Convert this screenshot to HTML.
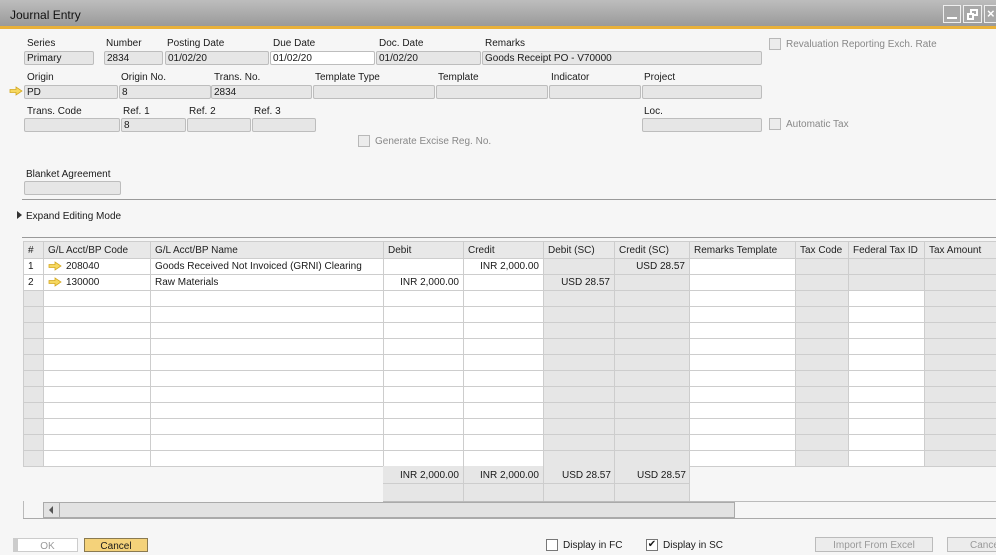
<!DOCTYPE html>
<html><head><meta charset="utf-8"><style>
*{margin:0;padding:0;box-sizing:border-box}
body{width:996px;height:550px;overflow:hidden;background:#f6f6f6;font-family:"Liberation Sans",Arial,sans-serif;font-size:10px;color:#1a1a1a;position:relative}
.a{position:absolute;white-space:nowrap}
.bx{position:absolute;height:14px;background:#e6e6e6;border:1px solid #bdbdbd;border-radius:2px;padding:0 2px;line-height:13px;font-size:10px}
.lb{position:absolute;font-size:10px}
.cb{position:absolute;width:12px;height:12px;border:1px solid #b8b8b8;background:#ececec}
table{position:absolute;left:23px;top:241px;width:973px;border-collapse:collapse;table-layout:fixed;font-size:10px}
td{border:1px solid #cdcdcd;height:16px;padding:0 4px;white-space:nowrap;overflow:hidden;background:#fff}
tr.h td{height:17px;background:#e8e8e8;color:#222}
td.g{background:#e6e6e6}
td.r{text-align:right}
.ar{display:inline-block;vertical-align:-2px;margin-right:4px}
</style></head><body>
<svg width="0" height="0" style="position:absolute"><defs><symbol id="arw" viewBox="0 0 14 10"><path d="M1 3.5H7V1L13 5L7 9V6.5H1Z" fill="#f6d860" stroke="#d4a820" stroke-width="0.8"/></symbol></defs></svg>
<div class="a" style="left:0;top:0;width:996px;height:26px;background:linear-gradient(#bdbdbd,#9a9a9a);"></div>
<div class="a" style="left:0;top:26px;width:996px;height:3px;background:#e9b13a"></div>
<div class="a" style="left:10px;top:8px;font-size:12px;color:#111">Journal Entry</div>
<div class="a" style="left:943px;top:5px;width:18px;height:18px;border:1px solid #eee;background:#a8a8a8"><div style="position:absolute;left:3px;bottom:3px;width:10px;height:2px;background:#fff"></div></div>
<div class="a" style="left:963px;top:5px;width:19px;height:18px;border:1px solid #eee;background:#a8a8a8"><div style="position:absolute;left:6px;top:3px;width:8px;height:7px;border:2px solid #fff"></div><div style="position:absolute;left:3px;top:7px;width:7px;height:7px;border:2px solid #fff;background:#a8a8a8"></div></div>
<div class="a" style="left:984px;top:5px;width:14px;height:18px;border:1px solid #eee;background:#a8a8a8;color:#fff;font-size:13px;font-weight:bold;padding-left:2px">×</div>

<div class="lb" style="left:27px;top:38px">Series</div>
<div class="lb" style="left:106px;top:38px">Number</div>
<div class="lb" style="left:167px;top:38px">Posting Date</div>
<div class="lb" style="left:273px;top:38px">Due Date</div>
<div class="lb" style="left:379px;top:38px">Doc. Date</div>
<div class="lb" style="left:485px;top:38px">Remarks</div>
<div class="bx" style="left:24px;top:51px;width:70px">Primary</div>
<div class="bx" style="left:104px;top:51px;width:59px">2834</div>
<div class="bx" style="left:165px;top:51px;width:104px">01/02/20</div>
<div class="bx" style="left:270px;top:51px;width:105px;background:#fff">01/02/20</div>
<div class="bx" style="left:376px;top:51px;width:105px">01/02/20</div>
<div class="bx" style="left:482px;top:51px;width:280px">Goods Receipt PO - V70000</div>
<div class="cb" style="left:769px;top:38px"></div>
<div class="lb" style="left:786px;top:39px;color:#888">Revaluation Reporting Exch. Rate</div>

<div class="lb" style="left:27px;top:72px">Origin</div>
<div class="lb" style="left:121px;top:72px">Origin No.</div>
<div class="lb" style="left:214px;top:72px">Trans. No.</div>
<div class="lb" style="left:315px;top:72px">Template Type</div>
<div class="lb" style="left:438px;top:72px">Template</div>
<div class="lb" style="left:551px;top:72px">Indicator</div>
<div class="lb" style="left:644px;top:72px">Project</div>
<svg class="a" style="left:9px;top:86px" width="14" height="10"><use href="#arw"/></svg>
<div class="bx" style="left:24px;top:85px;width:94px">PD</div>
<div class="bx" style="left:119px;top:85px;width:92px">8</div>
<div class="bx" style="left:211px;top:85px;width:101px">2834</div>
<div class="bx" style="left:313px;top:85px;width:122px"></div>
<div class="bx" style="left:436px;top:85px;width:112px"></div>
<div class="bx" style="left:549px;top:85px;width:92px"></div>
<div class="bx" style="left:642px;top:85px;width:120px"></div>

<div class="lb" style="left:27px;top:106px">Trans. Code</div>
<div class="lb" style="left:123px;top:106px">Ref. 1</div>
<div class="lb" style="left:189px;top:106px">Ref. 2</div>
<div class="lb" style="left:254px;top:106px">Ref. 3</div>
<div class="lb" style="left:644px;top:106px">Loc.</div>
<div class="bx" style="left:24px;top:118px;width:96px"></div>
<div class="bx" style="left:121px;top:118px;width:65px">8</div>
<div class="bx" style="left:187px;top:118px;width:64px"></div>
<div class="bx" style="left:252px;top:118px;width:64px"></div>
<div class="bx" style="left:642px;top:118px;width:120px"></div>
<div class="cb" style="left:769px;top:118px"></div>
<div class="lb" style="left:786px;top:119px;color:#888">Automatic Tax</div>
<div class="cb" style="left:358px;top:135px"></div>
<div class="lb" style="left:375px;top:136px;color:#888">Generate Excise Reg. No.</div>

<div class="lb" style="left:26px;top:169px">Blanket Agreement</div>
<div class="bx" style="left:24px;top:181px;width:97px"></div>
<div class="a" style="left:22px;top:199px;width:974px;height:1px;background:#9a9a9a"></div>
<div class="a" style="left:17px;top:211px;width:0;height:0;border-top:4px solid transparent;border-bottom:4px solid transparent;border-left:5px solid #333"></div>
<div class="lb" style="left:26px;top:211px">Expand Editing Mode</div>
<div class="a" style="left:22px;top:237px;width:974px;height:1px;background:#9a9a9a"></div>

<table>
<colgroup><col style="width:20px"><col style="width:107px"><col style="width:233px"><col style="width:80px"><col style="width:80px"><col style="width:71px"><col style="width:75px"><col style="width:106px"><col style="width:53px"><col style="width:76px"><col style="width:72px"></colgroup>
<tr class="h"><td>#</td><td>G/L Acct/BP Code</td><td>G/L Acct/BP Name</td><td>Debit</td><td>Credit</td><td>Debit (SC)</td><td>Credit (SC)</td><td>Remarks Template</td><td>Tax Code</td><td>Federal Tax ID</td><td>Tax Amount</td></tr>
<tr><td>1</td><td><svg class="ar" width="14" height="10"><use href="#arw"/></svg>208040</td><td>Goods Received Not Invoiced (GRNI) Clearing</td><td></td><td class="r">INR 2,000.00</td><td class="g"></td><td class="g r">USD 28.57</td><td></td><td class="g"></td><td class="g"></td><td class="g"></td></tr>
<tr><td>2</td><td><svg class="ar" width="14" height="10"><use href="#arw"/></svg>130000</td><td>Raw Materials</td><td class="r">INR 2,000.00</td><td></td><td class="g r">USD 28.57</td><td class="g"></td><td></td><td class="g"></td><td class="g"></td><td class="g"></td></tr>
<tr><td class="g"></td><td></td><td></td><td></td><td></td><td class="g"></td><td class="g"></td><td></td><td class="g"></td><td></td><td class="g"></td></tr>
<tr><td class="g"></td><td></td><td></td><td></td><td></td><td class="g"></td><td class="g"></td><td></td><td class="g"></td><td></td><td class="g"></td></tr>
<tr><td class="g"></td><td></td><td></td><td></td><td></td><td class="g"></td><td class="g"></td><td></td><td class="g"></td><td></td><td class="g"></td></tr>
<tr><td class="g"></td><td></td><td></td><td></td><td></td><td class="g"></td><td class="g"></td><td></td><td class="g"></td><td></td><td class="g"></td></tr>
<tr><td class="g"></td><td></td><td></td><td></td><td></td><td class="g"></td><td class="g"></td><td></td><td class="g"></td><td></td><td class="g"></td></tr>
<tr><td class="g"></td><td></td><td></td><td></td><td></td><td class="g"></td><td class="g"></td><td></td><td class="g"></td><td></td><td class="g"></td></tr>
<tr><td class="g"></td><td></td><td></td><td></td><td></td><td class="g"></td><td class="g"></td><td></td><td class="g"></td><td></td><td class="g"></td></tr>
<tr><td class="g"></td><td></td><td></td><td></td><td></td><td class="g"></td><td class="g"></td><td></td><td class="g"></td><td></td><td class="g"></td></tr>
<tr><td class="g"></td><td></td><td></td><td></td><td></td><td class="g"></td><td class="g"></td><td></td><td class="g"></td><td></td><td class="g"></td></tr>
<tr><td class="g"></td><td></td><td></td><td></td><td></td><td class="g"></td><td class="g"></td><td></td><td class="g"></td><td></td><td class="g"></td></tr>
<tr><td class="g"></td><td></td><td></td><td></td><td></td><td class="g"></td><td class="g"></td><td></td><td class="g"></td><td></td><td class="g"></td></tr>
</table>
<div class="a" style="left:383px;top:466px;width:306px;height:35px;background:#e6e6e6"></div>
<div class="a" style="left:463px;top:466px;width:1px;height:35px;background:#cdcdcd"></div>
<div class="a" style="left:543px;top:466px;width:1px;height:35px;background:#cdcdcd"></div>
<div class="a" style="left:614px;top:466px;width:1px;height:35px;background:#cdcdcd"></div>
<div class="a" style="left:689px;top:466px;width:1px;height:35px;background:#cdcdcd"></div>
<div class="a" style="left:383px;top:483px;width:306px;height:1px;background:#cdcdcd"></div>
<div class="a" style="left:383px;top:501px;width:613px;height:1px;background:#bbb"></div>
<div class="lb" style="left:400px;top:470px">INR 2,000.00</div>
<div class="lb" style="left:480px;top:470px">INR 2,000.00</div>
<div class="lb" style="left:562px;top:470px">USD 28.57</div>
<div class="lb" style="left:637px;top:470px">USD 28.57</div>
<div class="a" style="left:23px;top:501px;width:1px;height:18px;background:#bbb"></div>
<div class="a" style="left:23px;top:518px;width:973px;height:1px;background:#aaa"></div>
<div class="a" style="left:43px;top:502px;width:692px;height:16px;background:#e2e2e2;border:1px solid #aaa"></div>
<div class="a" style="left:59px;top:502px;width:1px;height:16px;background:#aaa"></div>
<div class="a" style="left:49px;top:506px;width:0;height:0;border-top:4px solid transparent;border-bottom:4px solid transparent;border-right:4px solid #555"></div>

<div class="a" style="left:13px;top:538px;width:65px;height:14px;background:#fff;border:1px solid #ccc;border-left:5px solid #ccc;text-align:center;color:#999;font-size:10px;line-height:16px">OK</div>
<div class="a" style="left:84px;top:538px;width:64px;height:14px;background:#f4d27a;border:1px solid #8a7a50;text-align:center;font-size:10px;line-height:16px">Cancel</div>
<div class="cb" style="left:546px;top:539px;background:#fff;border-color:#777"></div>
<div class="lb" style="left:563px;top:540px">Display in FC</div>
<div class="cb" style="left:646px;top:539px;background:#fff;border-color:#777;font-size:10px;line-height:10px;text-align:center">✔</div>
<div class="lb" style="left:663px;top:540px">Display in SC</div>
<div class="a" style="left:815px;top:537px;width:118px;height:15px;background:#ececec;border:1px solid #bbb;text-align:center;color:#999;font-size:10px;line-height:16px">Import From Excel</div>
<div class="a" style="left:947px;top:537px;width:60px;height:15px;background:#ececec;border:1px solid #bbb;color:#999;font-size:10px;line-height:16px;padding-left:22px">Cancel</div>
</body></html>
